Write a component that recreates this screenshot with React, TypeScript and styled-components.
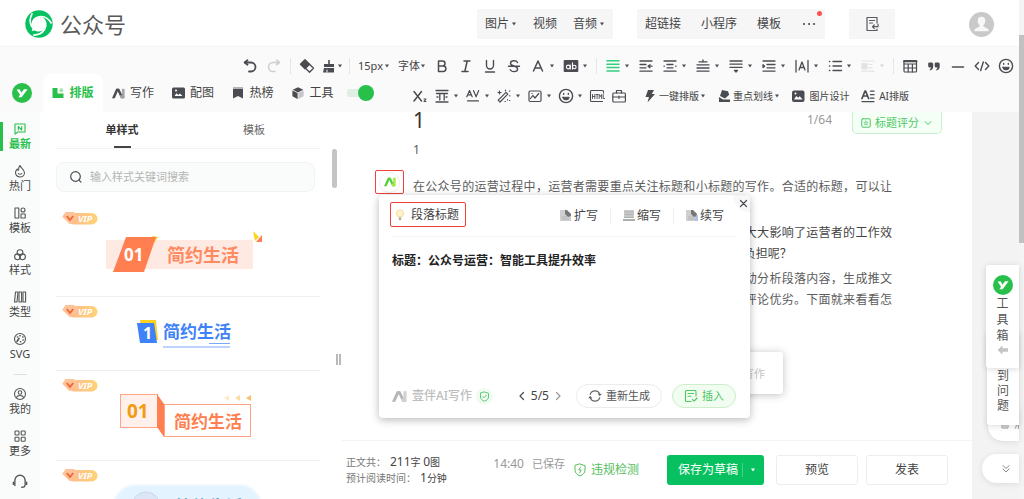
import React from 'react';
import styled, { createGlobalStyle } from 'styled-components';

const INK = '#4b4b52';
const GREEN = '#28c04b';

const Global = createGlobalStyle`
  *, *::before, *::after { box-sizing: border-box; }
  body {
    margin: 0;
    background: #fff;
    color: #5c5c5c;
    font-family: "Noto Sans", "Noto Sans CJK SC", sans-serif;
    font-size: 12px;
    line-height: 16px;
  }
  button, input, select { font: inherit; color: inherit; }
  button { padding: 0; border: 0; background: none; cursor: pointer; }
  h1, p, ul, dl, dd { margin: 0; padding: 0; }
  ul { list-style: none; }
  svg { display: block; flex: none; }
`;

/* ---------- icons ---------- */

type IconProps = { w?: number; h?: number; box?: string; color?: string; sw?: number; children: React.ReactNode };

const Icon = ({ w = 16, h = 16, box = '0 0 16 16', color = INK, sw = 1.4, children }: IconProps) => (
  <svg width={w} height={h} viewBox={box} fill="none" stroke={color} strokeWidth={sw} strokeLinecap="round" strokeLinejoin="round" aria-hidden="true">
    {children}
  </svg>
);

const Caret = ({ color = INK }: { color?: string }) => (
  <svg width="6" height="16" viewBox="0 0 6 16" aria-hidden="true">
    <path d="M1 6.5h4L3 9.5z" fill={color} />
  </svg>
);

const YLogo = ({ size = 20 }: { size?: number }) => (
  <svg width={size} height={size} viewBox="0 0 20 20" aria-hidden="true">
    <circle cx="10" cy="10" r="10" fill={GREEN} />
    <path d="M4.600 6.600h3.200l1.600 3.200 2.600-3.600h3.600l-6 8H6.400l1.600-2.400z" fill="#fff" />
  </svg>
);

const AiMark = ({ w = 14, from = INK, to = '#a5a5aa' }: { w?: number; from?: string; to?: string }) => (
  <svg width={w} height={w} viewBox="0 0 14 14" aria-hidden="true">
    <path d="M0 12 4.500 2H7.500L3 12z" fill={from} />
    <path d="M10.600 2H13.600V12H10.600z" fill={to} />
    <path d="M5 2H7.800L12.600 12H9.600z" fill={from} />
    <path d="M8.300 9.200 9.600 12h3L11 8.600z" fill={to} />
  </svg>
);

const MpLogo = () => (
  <svg width="28" height="28" viewBox="0 0 28 28" aria-hidden="true">
    <circle cx="14" cy="14" r="13.700" fill="#07c160" />
    <circle cx="14" cy="14" r="7" fill="#fff" />
    {[0, 120, 240].map(a => (
      <path key={a} d="M7.300 15.500C7 10 11 6.300 16 6.500c4.500.2 8 2.500 10.500 7" transform={`rotate(${a} 14 14)`} fill="none" stroke="#fff" strokeWidth="1.700" />
    ))}
    <path d="M8 17 6.700 21.300l4.300-1.500z" fill="#fff" />
  </svg>
);

const lines = (ys: number[], x1 = 2, x2 = 14) => ys.map(y => `M${x1} ${y}H${x2}`).join('');

const icons = {
  undo: <Icon sw={1.8}><path d="M5.500 2.200 2.600 4.500l2.900 2.200" /><path d="M3 4.500h6a4 4 0 0 1 0 9H7" /></Icon>,
  redo: <Icon sw={1.600} color="#cfcfd1"><path d="m10.500 2.200 2.900 2.300-2.900 2.200" /><path d="M13 4.500H7a4 4 0 0 0 0 9h2" /></Icon>,
  eraser: <Icon><path d="M6 1.800 1.500 6.300l4.500 4.500 4.500-4.500z" fill={INK} /><path d="m10.500 6.300 4 4-4 4-4-4" /></Icon>,
  brush: <Icon><path d="M7.200 2h1.600v4H13v3H3V6h4.200zM3 10h10v4.500H2z" fill={INK} stroke="none" /><path d="M6 12v2" stroke="#fafafa" strokeWidth="1" /></Icon>,
  bold: <Icon sw={1.500}><path d="M4.500 3h4a2.500 2.500 0 0 1 0 5h-4zM4.500 8h4.700a2.700 2.700 0 0 1 0 5.400H4.500z" /></Icon>,
  italic: <Icon sw={1.500}><path d="M6 3h6M4 13.500h6M9.200 3 6.800 13.500" /></Icon>,
  underline: <Icon sw={1.400}><path d="M4.500 2.500v5a3.500 3.500 0 0 0 7 0v-5M3.500 14h9" /></Icon>,
  strike: <Icon sw={1.400}><path d="M11.500 4.500C11 3.300 9.800 2.800 8 2.800c-2 0-3.500.8-3.500 2.500C4.500 8.500 11.600 7.500 11.600 11c0 1.700-1.600 2.600-3.600 2.600-1.900 0-3.300-.7-3.700-2M2.500 8.200h11" /></Icon>,
  color: <Icon sw={1.500}><path d="m3.500 13 4.500-10 4.500 10M5 10h6" /></Icon>,
  fill: <Icon><rect x=".7" y="2" width="14.600" height="12" rx="1" fill={INK} stroke="none" /><circle cx="5.300" cy="9" r="1.900" stroke="#fff" strokeWidth="1.100" /><path d="M7.300 7v4M9.500 4.800V11" stroke="#fff" strokeWidth="1.100" /><circle cx="11.300" cy="9" r="1.800" stroke="#fff" strokeWidth="1.100" /></Icon>,
  align: <Icon color="#2fcf7c" sw={1.500}><path d={lines([2.800, 6.200, 9.600, 13], 2, 14)} /></Icon>,
  indent: <Icon sw={1.300}><path d="M2 3h12M2 6.500h6M2 9.800h6M2 13.200h12M10 8.200h4m-2-1.500-2 1.500 2 1.500" /></Icon>,
  center: <Icon sw={1.300}><path d="M2 3h12M5 6.500h6M5 9.800h6M2 13.200h12M2 8.200h.4M13.600 8.200h.4" /></Icon>,
  before: <Icon sw={1.300}><path d="M2 6.800h12M2 10h12M2 13.200h12M4 3.800h8M8 2v2" /></Icon>,
  after: <Icon sw={1.300}><path d="M2 3h12M2 6.200h12M2 9.400h12M6.500 12.300h3L8 14z" /></Icon>,
  margin: <Icon sw={1.300}><path d="M2 3h12M6 6.500h8M6 9.800h8M2 13.200h12M2 6.800v2.800l1.600-1.400z" /></Icon>,
  spacing: <Icon sw={1.300}><path d="M2 2.500v11.500M14 2.500v11.500M5 12l3-8 3 8M6 9.500h4" /></Icon>,
  list: <Icon sw={1.400}><path d="M6 3.500h8.500M6 8h8.500M6 12.500h8.500M2.500 3.500h.3M2.500 8h.3M2.500 12.500h.3" /></Icon>,
  float: <Icon color="#e3e3e5" sw={1.200}><path d="M2 3h12M9 6.500h3M9 9.800h3M2 13.200h12" /><rect x="2" y="5.500" width="5" height="5.500" fill="#e3e3e5" /></Icon>,
  table: <Icon sw={1.200}><rect x="2" y="2.500" width="12.500" height="11.500" rx="1" /><path d="M2 6h12.500M2 10h12.500M6.200 6v8M10.400 6v8" /><path d="M2 3.200h12.500" strokeWidth="2" /></Icon>,
  quote: <Icon><path d="M3.200 4.500h2.500a1.500 1.500 0 0 1 1.500 1.500v2.500c0 2.200-1.200 3.600-3.400 4v-1.300c.8-.3 1.200-.9 1.200-1.800H3.700a1.500 1.500 0 0 1-1.500-1.500V5.500a1 1 0 0 1 1-1zM9.700 4.500h2.500A1.500 1.500 0 0 1 13.700 6v2.500c0 2.200-1.200 3.600-3.400 4v-1.300c.8-.3 1.200-.9 1.200-1.800h-1.300a1.500 1.500 0 0 1-1.500-1.500V5.500a1 1 0 0 1 1-1z" fill={INK} stroke="none" /></Icon>,
  rule: <Icon sw={1.600}><path d="M2.500 9h11" /></Icon>,
  code: <Icon sw={1.400}><path d="M4.500 4.500 1.200 8l3.300 3.500M11.500 4.500 14.800 8l-3.300 3.500M9.300 4 6.700 12.500" /></Icon>,
  smile: <Icon sw={1.400}><circle cx="8" cy="8" r="6.600" /><path d="M4.800 9.300h6.400a3.200 2.600 0 0 1-6.400 0z" fill={INK} strokeWidth="1" /><path d="M5.700 5.500v.8M10.300 5.500v.8" /></Icon>,
  sub: <Icon sw={1.500}><path d="m2 3.500 7.500 9.500M9.500 3.500 2 13" /><path d="M12 11h2l-2 2.500h2" strokeWidth="1.100" /></Icon>,
  justify: <Icon sw={1.300}><path d="M2 2.500h12M2 14h12M2.500 5.500h11M5.800 5.500V12M10.200 5.500V12M3 9h1M12 9h1" /></Icon>,
  kerning: <Icon sw={1.200}><path d="m1.800 8.800 2.700-6.300 2.700 6.300M2.800 6.800h3.400M8.500 2.500l2.600 6.300 2.600-6.300M2.500 12.800h11" /></Icon>,
  wand: <Icon sw={1.200}><path d="M2.200 12.200 10 4.400l1.800 1.800L4 14zM9.500 2.200v.6M13.500 3.200l.3-.3M13.800 7.500v.5M3.500 3v3M2 4.500h3M11.500 11.500v.4M9 13.500h.4M13.500 12.500h.2" /></Icon>,
  image: <Icon sw={1.200}><rect x="2" y="3" width="12" height="10.500" rx="1.200" /><path d="m3.500 10.500 2.300-3 2.200 2.500 3.800-4.500M5 5.500h.2" /></Icon>,
  html: <Icon sw={1.100}><path d="M14.500 5V3.500a1 1 0 0 0-1-1h-11a1 1 0 0 0-1 1v9a1 1 0 0 0 1 1h11" /><path d="M3.500 6.500v4M5.800 6.500v4M3.500 8.500h2.300M7 6.500h2.200M8.100 6.500v4M10.200 10.500v-4l1.200 2 1.200-2v4M14.200 6.500v4h1.400" strokeWidth=".9" /></Icon>,
  toolbox: <Icon sw={1.200}><rect x="1.800" y="5" width="12.600" height="9" rx="1" /><path d="M5.500 5V2.500h5V5M1.800 9h12.600M8 8v2.500" /></Icon>,
  bolt: <Icon><path d="M6 2h6L9.800 6H13L5.500 14.500 7 9H3.500z" fill={INK} stroke="none" /></Icon>,
  marker: <Icon><path d="m6 2 6 1.200 1.200 3.500L9 10.500 4 8zM3 9l4 2.500H14V14H3z" fill={INK} stroke="none" /></Icon>,
  picture: <Icon><rect x="2" y="2.500" width="12.500" height="11.500" rx="2" fill={INK} stroke="none" /><path d="M4 11.500 6.300 8l1.800 1.800 1.600-1.500 3 3.200z" fill="#fff" stroke="none" /><circle cx="5.500" cy="5.500" r="1" fill="#fff" stroke="none" /></Icon>,
  aiText: <Icon sw={1.300}><path d="m2 10.500 3-7.500h.6l3 7.500M3 8h4.500" strokeWidth="1.700" /><path d="M10.500 3.200h3.500M10.500 6.700h3.500M10.500 10.200h3.500M2 13.600h12" /></Icon>,
};

/* ---------- shell ---------- */

const Shell = styled.div`
  display: flex;
  height: 100vh;
  overflow: hidden;
`;
const Page = styled.div`
  flex: 1;
  min-width: 0;
  display: flex;
  flex-direction: column;
`;
const PageScroll = styled.div`
  width: 5px;
  padding-top: 35px;
  background: #f4f4f4;
  &::before {
    content: "";
    display: block;
    height: 208px;
    background: #c1c1c1;
  }
`;

/* ---------- header ---------- */

const Header = styled.header`
  display: flex;
  align-items: center;
  gap: 24px;
  height: 46px;
  padding: 2px 25px 0;
`;
const Brand = styled.a`
  display: flex;
  align-items: center;
  gap: 7px;
  margin-right: auto;
  color: #595959;
  font-size: 22px;
  line-height: 28px;
  text-decoration: none;
`;
const InsertGroup = styled.nav<{ $gap?: number }>`
  position: relative;
  display: flex;
  align-items: center;
  gap: ${p => p.$gap ?? 16}px;
  height: 30px;
  padding: 0 8px;
  background: #f6f6f7;
  border-radius: 2px;
`;
const InsertButton = styled.button`
  display: flex;
  align-items: center;
  gap: 2px;
  color: #444;
`;
const RedDot = styled.i`
  position: absolute;
  top: 2px;
  right: 3px;
  width: 5px;
  height: 5px;
  border-radius: 50%;
  background: #fa5151;
`;
const IconButton = styled.button`
  display: grid;
  place-items: center;
  width: 46px;
  height: 30px;
  background: #f6f6f7;
`;
const Avatar = styled.button`
  margin: 0 0 0 50px;
`;

/* ---------- toolbar ---------- */

const ToolBand = styled.div`
  background: #fafafa;
  border-top: 1px solid #f5f5f5;
`;
const ToolRow = styled.div`
  display: flex;
  align-items: center;
  gap: 8px;
  height: 27px;
  padding: 11px 0 0 242px;
`;
const LowerBand = styled.div`
  display: flex;
  height: 38px;
`;
const Tool = styled.button<{ $tight?: boolean }>`
  display: flex;
  align-items: center;
  gap: ${p => (p.$tight ? 0 : 3)}px;
  margin-right: ${p => (p.$tight ? -2 : 0)}px;
`;
const Rule = styled.i`
  width: 1px;
  height: 16px;
  background: #e6e6e6;
`;
const SelectWrap = styled.label<{ $w: number }>`
  display: flex;
  width: ${p => p.$w}px;
  select {
    flex: 1;
    min-width: 0;
    padding: 0;
    border: 0;
    background: none;
    appearance: none;
    color: #444;
    font-size: 11px;
    line-height: 16px;
  }
`;
const LogoCell = styled.a`
  display: grid;
  place-items: center;
  width: 43px;
`;
const ModeTab = styled.button<{ $on?: boolean }>`
  display: flex;
  align-items: center;
  justify-content: center;
  gap: 5px;
  width: 60px;
  border-radius: 8px 8px 0 0;
  background: ${p => (p.$on ? '#fff' : 'transparent')};
  color: ${p => (p.$on ? GREEN : '#444')};
  font-weight: ${p => (p.$on ? 700 : 400)};
`;
const Toggle = styled.label`
  display: grid;
  align-items: center;
  width: 31px;
  padding-left: 4px;
  input {
    appearance: none;
    width: 27px;
    height: 16px;
    margin: 0;
    display: flex;
    justify-content: flex-end;
    background: linear-gradient(#e0efe3, #e0efe3) center / 27px 8px no-repeat;
    border-radius: 8px;
  }
  input::before {
    content: "";
    width: 16px;
    height: 16px;
    border-radius: 50%;
    background: ${GREEN};
  }
`;
const LowerTools = styled.div`
  display: flex;
  align-items: center;
  gap: 6px;
  padding: 6px 0 0 38px;
`;
const NamedTools = styled.div`
  display: flex;
  gap: 10px;
  padding-left: 9px;
`;
const NamedTool = styled.button`
  display: flex;
  align-items: center;
  gap: 1px;
  color: #444;
  font-size: 10px;
  white-space: nowrap;
`;

/* ---------- body ---------- */

const Body = styled.div`
  flex: 1;
  min-height: 0;
  display: flex;
`;
const Rail = styled.nav`
  width: 40px;
  padding-top: 10px;
  background: #fafcfb;
`;
const RailList = styled.ul`
  display: flex;
  flex-direction: column;
  gap: 13px;
`;
const RailItem = styled.button<{ $on?: boolean }>`
  display: flex;
  flex-direction: column;
  align-items: center;
  gap: 1px;
  width: 100%;
  font-size: 11px;
  line-height: 14px;
  color: ${p => (p.$on ? GREEN : '#444')};
  font-weight: ${p => (p.$on ? 700 : 400)};
  box-shadow: ${p => (p.$on ? `inset 3px 0 ${GREEN}` : 'none')};
`;
const RailRule = styled.div`
  display: grid;
  place-items: center;
  height: 26px;
  &::before {
    content: "";
    width: 13px;
    height: 1px;
    background: #ddd;
  }
`;
const Panel = styled.section`
  display: flex;
  flex-direction: column;
  width: 292px;
  padding: 0 12px 0 16px;
  overflow: hidden;
`;
const PanelTabs = styled.div`
  display: flex;
  flex: none;
  height: 37px;
  border-bottom: 1px solid #f2f2f2;
`;
const PanelTab = styled.button<{ $on?: boolean }>`
  flex: 1;
  display: flex;
  flex-direction: column;
  align-items: center;
  justify-content: space-between;
  padding-top: 10px;
  font-size: 11px;
  color: ${p => (p.$on ? '#333' : '#666')};
  font-weight: ${p => (p.$on ? 700 : 400)};
  &::after {
    content: "";
    width: 17px;
    height: 2px;
    background: ${p => (p.$on ? '#444' : 'transparent')};
  }
`;
const Search = styled.label`
  display: flex;
  flex: none;
  align-items: center;
  gap: 7px;
  height: 30px;
  margin: 13px 5px 12px 0;
  padding-left: 12px;
  background: #fafcfb;
  border: 1px solid #f1f4f3;
  border-radius: 8px;
  input {
    flex: 1;
    min-width: 0;
    padding: 0;
    border: 0;
    outline: 0;
    background: none;
    font-size: 11px;
  }
  input::placeholder { color: #b4b4b4; }
`;
const Card = styled.li<{ $h: number }>`
  position: relative;
  height: ${p => p.$h}px;
  border-bottom: 1px solid #f0f0f0;
  svg { overflow: visible; }
  > svg:last-child { width: 100%; height: 100%; }
`;
const VipSpot = styled.span`
  position: absolute;
  top: 8px;
  left: 6px;
`;
const SplitStrip = styled.div`
  display: flex;
  flex-direction: column;
  width: 10px;
`;
const PanelThumb = styled.i`
  width: 5px;
  height: 39px;
  margin: 37px 0 166px;
  border-radius: 3px;
  background: #c4c4c6;
`;
const SplitHandle = styled.i`
  align-self: flex-end;
  width: 5px;
  height: 11px;
  margin-right: 1px;
  border: solid #b9b9bd;
  border-width: 0 2px;
`;

/* ---------- editor ---------- */

const Editor = styled.main`
  flex: 1;
  min-width: 0;
  display: flex;
  flex-direction: column;
`;
const Sheet = styled.div`
  flex: 1;
  min-height: 0;
  padding: 0 80px 0 71px;
`;
const TitleRow = styled.div`
  display: flex;
  align-items: flex-start;
  height: 27px;
  margin-right: -50px;
`;
const Title = styled.h1`
  margin-right: auto;
  color: #333;
  font-size: 21px;
  font-weight: 400;
  line-height: 16px;
`;
const Count = styled.span`
  margin-right: 20px;
  color: #999;
`;
const ScoreButton = styled.button`
  display: flex;
  align-items: center;
  gap: 4px;
  height: 22px;
  padding: 0 8px;
  border: 1px solid #c9efd0;
  border-top: 0;
  border-radius: 0 0 5px 5px;
  background: #f4fff5;
  color: #4cc764;
  font-size: 11px;
`;
const Author = styled.p`
  height: 37px;
  padding-top: 3px;
`;
const Article = styled.article`
  position: relative;
  text-align: justify;
  line-height: 21px;
  p + p { margin-top: 4px; }
`;
const Lead = styled.p`
  min-height: 42px;
  text-align-last: justify;
`;
const Strong = styled.p`
  color: #444;
`;
const Spot = styled.div`
  position: absolute;
  top: -6px;
  left: -38px;
  display: grid;
  place-items: center;
  width: 29px;
  height: 24px;
  border: 1px solid #f0413a;
  border-radius: 2px;
  button {
    display: grid;
    place-items: center;
    width: 21px;
    height: 21px;
    border: 1px solid #f0f0f0;
    border-radius: 50%;
    background: #fff;
  }
`;
const BackCard = styled.div`
  position: absolute;
  top: 176px;
  left: 200px;
  width: 170px;
  height: 42px;
  padding: 11px 18px;
  border-radius: 3px;
  background: #fff;
  box-shadow: 0 1px 8px rgba(0, 0, 0, .25);
  color: #c4c4c4;
  font-size: 11px;
  text-align: right;
`;
const Popup = styled.section`
  position: absolute;
  top: 19px;
  left: -34px;
  display: flex;
  flex-direction: column;
  width: 371px;
  height: 223px;
  padding: 0 14px 10px 13px;
  border-radius: 4px;
  background: #fff;
  box-shadow: 0 2px 9px rgba(0, 0, 0, .28);
  line-height: 16px;
`;
const PopupHead = styled.header`
  display: flex;
  align-items: center;
  height: 42px;
  border-bottom: 1px solid #f3f3f3;
`;
const MainAction = styled.button`
  display: flex;
  align-items: center;
  gap: 5px;
  height: 25px;
  margin: 0 auto 2px -2px;
  padding: 0 6px 0 3px;
  border: 1px solid #f0413a;
  border-radius: 2px;
  color: #444;
`;
const SideAction = styled.button`
  display: flex;
  align-items: center;
  gap: 2px;
  padding: 0 12px;
  color: #444;
  & + & { border-left: 1px solid #f0f0f0; }
`;
const Close = styled.button`
  position: absolute;
  top: 0;
  right: 0;
  display: grid;
  place-items: center;
  width: 17px;
  height: 17px;
  padding-left: 4px;
  border-radius: 0 4px 0 17px;
  background: #f7f7f7;
`;
const Result = styled.p`
  flex: 1;
  padding-top: 16px;
  color: #222;
  font-weight: 700;
`;
const PopupFoot = styled.footer`
  display: flex;
  align-items: center;
  gap: 4px;
`;
const AiName = styled.span`
  display: flex;
  align-items: center;
  gap: 5px;
  color: #bdbdbd;
  font-weight: 500;
`;
const Shield = styled.span`
  display: grid;
  place-items: center;
  width: 17px;
  height: 17px;
  border-radius: 50%;
  background: #f0fbf2;
`;
const Pager = styled.div`
  display: flex;
  align-items: center;
  gap: 4px;
  margin: 0 9px 0 auto;
  color: #444;
`;
const Pill = styled.button<{ $green?: boolean }>`
  display: flex;
  align-items: center;
  gap: 4px;
  height: 24px;
  margin-left: ${p => (p.$green ? 6 : 0)}px;
  padding: 0 11px;
  border: 1px solid ${p => (p.$green ? '#cdeecb' : '#ececec')};
  border-radius: 12px;
  background: ${p => (p.$green ? '#f1fdf0' : '#fff')};
  color: ${p => (p.$green ? '#4cc764' : '#555')};
  font-size: 11px;
`;

/* ---------- bottom bar ---------- */

const BottomBar = styled.footer`
  display: flex;
  align-items: center;
  height: 59px;
  padding: 0 24px 0 4px;
  border-top: 1px solid #f3f3f3;
  background: #fff;
  white-space: nowrap;
`;
const Stats = styled.dl`
  margin-right: auto;
  font-size: 10px;
  div { display: flex; gap: 4px; align-items: baseline; }
  dt { color: #777; }
  dd { color: #444; }
  b { font-size: 12px; font-weight: 400; line-height: 15px; }
`;
const Saved = styled.p`
  display: flex;
  gap: 8px;
  margin: 0 9px 12px 0;
  color: #999;
  small { font-size: 11px; }
`;
const CheckLink = styled.a`
  display: flex;
  align-items: center;
  gap: 5px;
  margin-right: 28px;
  color: #55c05c;
  text-decoration: none;
`;
const SaveSplit = styled.div`
  display: flex;
  align-items: center;
  height: 30px;
  border-radius: 3px;
  background: #07c160;
  color: #fff;
  button { height: 14px; line-height: 14px; }
  button:first-child { padding: 0 4px 0 11px; }
  button:last-child { padding: 0 8px 0 7px; border-left: 1px solid #4dd28d; display: flex; align-items: center; }
`;
const PlainButton = styled.button`
  width: 82px;
  height: 30px;
  margin-left: 8px;
  border: 1px solid #ededed;
  border-radius: 3px;
  color: #444;
  &:first-of-type { margin-left: 12px; }
`;

/* ---------- right side ---------- */

const Side = styled.aside`
  position: relative;
  width: 47px;
  background: #f3f3f3;
`;
const SideCard = styled.button<{ $top: number; $h: number; $x: number; $end?: boolean }>`
  position: absolute;
  top: ${p => p.$top}px;
  left: ${p => p.$x}px;
  right: 0;
  display: flex;
  flex-direction: column;
  align-items: center;
  justify-content: ${p => (p.$end ? 'flex-end' : 'flex-start')};
  gap: ${p => (p.$end ? 0 : 1)}px;
  height: ${p => p.$h}px;
  padding: 10px 0 12px;
  border-radius: 3px 0 0 3px;
  background: #fff;
  box-shadow: 0 1px 6px rgba(0, 0, 0, .15);
  color: #555;
  line-height: 15px;
`;
const SidePill = styled.button<{ $top: number; $x: number; $h: number }>`
  position: absolute;
  top: ${p => p.$top}px;
  left: ${p => p.$x}px;
  right: 0;
  display: flex;
  align-items: center;
  justify-content: flex-end;
  gap: 4px;
  height: ${p => p.$h}px;
  padding-right: 7px;
  overflow: hidden;
  border-radius: 15px 0 0 15px;
  background: #fff;
  box-shadow: 0 1px 6px rgba(0, 0, 0, .1);
  color: #888;
  font-size: 11px;
`;
const Cut = styled.span`
  width: 5px;
  margin-right: -7px;
  overflow: hidden;
`;

/* ---------- style cards ---------- */

const Vip = () => (
  <svg width="36" height="13" viewBox="0 0 36 13" role="img" aria-label="VIP">
    <defs>
      <linearGradient id="vip"><stop offset="0" stopColor="#ffb98f" /><stop offset="1" stopColor="#ffd377" /></linearGradient>
    </defs>
    <rect x="6" y="1" width="29.500" height="11.500" rx="5.700" fill="url(#vip)" />
    <path d="M3.500 0h8.500l3.500 4.500L8 12.500.2 4.800z" fill="#ffc39a" />
    <path d="m4.800 4 3.200 4 3.200-4" fill="none" stroke="#f0683a" strokeWidth="1.900" />
    <text x="16" y="10" fontSize="9" fontWeight="700" fontStyle="italic" fill="#fff">VIP</text>
  </svg>
);

const sample = '简约生活';

const ArtRibbon = () => (
  <svg aria-hidden="true">
    <rect x="50" y="36" width="147" height="29" fill="#ffe9e3" />
    <path d="m96 32 6 1-4 6zM56 68l5-4 4 4z" fill="#ffd21e" />
    <path d="M70 33h30L88 68H57z" fill="#ff7f50" />
    <text x="68" y="57" fontSize="17" fontWeight="700" fill="#fff">01</text>
    <text x="111" y="58" fontSize="18" fontWeight="700" fill="#ff8a5f">{sample}</text>
    <path d="m197 27 6 6-4 4z" fill="#ffd21e" />
    <path d="m206 31-6 7h6z" fill="#ff7f50" />
  </svg>
);
const ArtBlue = () => (
  <svg aria-hidden="true">
    <path d="M84 23h16l2 20H86z" fill="#ffd21e" />
    <path d="M81 26h17l3 20H84z" fill="#3f82f7" />
    <text x="87" y="42" fontSize="16" fontWeight="700" fill="#fff">1</text>
    <text x="107" y="41" fontSize="17" fontWeight="700" fill="#3f82f7">{sample}</text>
    <path d="M153 46.500h21" stroke="#7ba9f9" />
    <path d="M107 50h67" stroke="#bcd4fd" strokeWidth="2" />
  </svg>
);
const ArtFold = () => (
  <svg aria-hidden="true">
    <rect x="64.500" y="23.500" width="37" height="33" fill="#fff0ec" stroke="#ffa586" />
    <rect x="108.500" y="33.500" width="86" height="32" fill="#fff" stroke="#ffa586" />
    <path d="m101 23 7 10v33l-7-10z" fill="#ff7f50" />
    <text x="71" y="47" fontSize="19" fontWeight="700" fill="#f39c12">01</text>
    <text x="118" y="57" fontSize="17" fontWeight="700" fill="#ff7f50">{sample}</text>
    <path d="m168 27 5-3v6z" fill="#fdebc8" />
    <path d="m179 27 5-3v6z" fill="#fbdca0" />
    <path d="m190 27 5-3v6z" fill="#f8c06a" />
  </svg>
);
const ArtPill = () => (
  <svg aria-hidden="true">
    <rect x="58" y="24" width="147" height="42" rx="21" fill="#e3f3ff" stroke="#f1f9ff" strokeWidth="2" />
    <circle cx="90" cy="45" r="14" fill="#dde6f6" stroke="#cbd6ee" />
    <text x="119" y="52" fontSize="17" fontWeight="700" fill="#5f9fc0">{sample}</text>
  </svg>
);

/* ---------- data ---------- */

const ri = (children: React.ReactNode, color = '#555') => <Icon w={14} h={14} box="0 0 14 14" sw={1.100} color={color}>{children}</Icon>;

const railTop = [
  { name: '最新', on: true, icon: ri(<><path d="M2 2h10v8H5l-3 2z" /><path d="M5.300 8V4.500L8.700 8V4.500" /></>, GREEN) },
  { name: '热门', icon: ri(<><path d="M7 1.500c.5 2 4.500 4 4.500 7.200a4.500 4.300 0 0 1-9 0c0-1.700 1-3 1.800-3.700.3.800.7 1.200 1.200 1.300C5.500 4.500 6 2.500 7 1.500z" /><path d="M5.300 9.500c.8 1 2.600 1 3.400 0" /></>) },
  { name: '模板', icon: ri(<><rect x="2" y="2" width="3.800" height="10" /><circle cx="10" cy="4" r="2" /><rect x="8" y="8" width="4.200" height="4" /></>) },
  { name: '样式', icon: ri(<><circle cx="7" cy="4.600" r="2.900" /><circle cx="4.500" cy="8.800" r="2.900" /><circle cx="9.500" cy="8.800" r="2.900" /></>) },
  { name: '类型', icon: ri(<><path d="M2.500 2h2.500L4 12H1.500z" /><rect x="6" y="2" width="2.600" height="10" /><rect x="10" y="2" width="2.600" height="10" /></>) },
  { name: 'SVG', icon: ri(<><circle cx="7" cy="7" r="5.500" /><path d="M6 6.500 4 9.500M4.500 5h.3M7 3.700h.3M9.700 5h.3M10 8h.2M7.500 9.800h.2" strokeWidth="1.600" /></>) },
];
const railBottom = [
  { name: '我的', icon: ri(<><circle cx="7" cy="7" r="5.500" /><circle cx="7" cy="5.500" r="1.800" /><path d="M3.600 10.500c.6-2.600 6.200-2.600 6.800 0" /></>) },
  { name: '更多', icon: ri(<><rect x="2" y="2" width="4" height="4" rx=".8" /><rect x="8.200" y="2" width="4" height="4" rx=".8" /><rect x="2" y="8.200" width="4" height="4" rx=".8" /><rect x="8.200" y="8.200" width="4" height="4" rx=".8" /></>) },
];

const modes = [
  { name: '排版', on: true, icon: <Icon w={12} h={12} box="0 0 12 12"><path d="M.5 1h5v5.500h6V11H.5z" fill={GREEN} stroke="none" /><circle cx="9.300" cy="3.200" r="2" fill="#a5e3b1" stroke="none" /></Icon> },
  { name: '写作', icon: <AiMark w={13} /> },
  { name: '配图', icon: <Icon w={13} h={12} box="0 0 13 12"><rect y=".5" width="13" height="11" rx="1.500" fill={INK} stroke="none" /><path d="m2.500 9 2-2.800L6.300 8l1.500-1.500L10.500 9z" fill="#fff" stroke="none" /><circle cx="4" cy="3.500" r="1" fill="#fff" stroke="none" /></Icon> },
  { name: '热榜', icon: <Icon w={12} h={12} box="0 0 12 12"><path d="M1 0h10v2H1z" fill="#b5b5b9" stroke="none" /><path d="M1 2h10v9.500L6 9l-5 2.500z" fill={INK} stroke="none" /></Icon> },
  { name: '工具', icon: <Icon w={12} h={12} box="0 0 12 12"><path d="m6 .2 5.300 2.600L6 5.500.7 2.800z" fill={INK} stroke="none" /><path d="M.4 3.600 5.600 6v6L.4 9.300z" fill={INK} stroke="none" /><path d="M11.600 3.600 6.400 6v6l5.200-2.700z" fill="#c6c6ca" stroke="none" /></Icon> },
];

type ToolDef = [name: string, icon: React.ReactNode, menu?: boolean];
const textTools: ToolDef[] = [
  ['加粗', icons.bold], ['斜体', icons.italic], ['下划线', icons.underline], ['删除线', icons.strike],
  ['文字颜色', icons.color, true], ['背景色', icons.fill, true],
];
const paraTools: ToolDef[] = [
  ['对齐', icons.align, true], ['首行缩进', icons.indent], ['居中', icons.center, true], ['段前距', icons.before, true],
  ['段后距', icons.after, true], ['两端缩进', icons.margin, true], ['字间距', icons.spacing, true], ['列表', icons.list, true],
];
const blockTools: ToolDef[] = [
  ['表格', icons.table], ['引用', icons.quote], ['分隔线', icons.rule], ['代码', icons.code], ['表情', icons.smile],
];
const lowerTools: ToolDef[] = [
  ['下标', icons.sub], ['行间距', icons.justify, true], ['字符间距', icons.kerning, true], ['魔棒', icons.wand, true],
  ['图片', icons.image, true], ['表情', icons.smile, true], ['HTML', icons.html], ['工具箱', icons.toolbox],
];

const Tools = ({ items }: { items: ToolDef[] }) => (
  <>
    {items.map(([name, icon, menu]) => (
      <Tool key={name} type="button" aria-label={name} aria-haspopup={menu}>
        {icon}
        {menu && <Caret />}
      </Tool>
    ))}
  </>
);

const DocIcon = ({ kind }: { kind: number }) => (
  <svg width="12" height="13" viewBox="0 0 12 13" aria-hidden="true">
    {kind === 1 ? (
      <>
        <path d="M1 1h10v7H1z" fill="#c9c9c9" />
        <path d="M0 10h12v2H0zM1 8h10v1H1z" fill="#adadad" />
        <path d="M2 3h8M2 5.500h8" stroke="#b5b5b5" />
      </>
    ) : (
      <>
        <path d="M0 1h6l5 4v7H0z" fill="#cfcfcf" />
        <path d="M5 1h2l4 4v2L8 8 5 5z" fill="#77777a" />
        {kind === 2 && <path d="M10 6h2v6H9z" fill="#a9c6e6" />}
        <path d="M2 8h5M2 10h7" stroke="#b5b5b5" />
      </>
    )}
  </svg>
);

export default function App() {
  return (
    <Shell>
      <Global />
      <Page>
        <Header>
          <Brand href="#"><MpLogo />公众号</Brand>
          <InsertGroup>
            <InsertButton type="button" aria-haspopup>图片<Caret /></InsertButton>
            <InsertButton type="button">视频</InsertButton>
            <InsertButton type="button" aria-haspopup>音频<Caret /></InsertButton>
          </InsertGroup>
          <InsertGroup $gap={20}>
            <InsertButton type="button">超链接</InsertButton>
            <InsertButton type="button">小程序</InsertButton>
            <InsertButton type="button">模板</InsertButton>
            <InsertButton type="button" aria-label="更多">
              <Icon><path d="M3 8h.1M8 8h.1M13 8h.1" strokeWidth="2" /></Icon>
            </InsertButton>
            <RedDot />
          </InsertGroup>
          <IconButton type="button" aria-label="导入文档">
            <Icon sw={1.200} color="#5a5a5e"><path d="M13 7V1.500H3v13h10v-1.500M5.500 4.500h5M5.500 7h3M14 8v2.700H8.500m1.800-1.900-1.800 1.900 1.800 1.900" /></Icon>
          </IconButton>
          <Avatar type="button" aria-label="账号">
            <svg width="25" height="25" viewBox="0 0 25 25" aria-hidden="true">
              <circle cx="12.500" cy="12.500" r="12.500" fill="#c9c9c9" />
              <path d="M12.500 4.800c2.300 0 3.800 1.600 3.800 4 0 2-.9 3.600-1.900 4.400v1.300l4.300 2.200c.7.400.9.900.9 2.500H5.400c0-1.600.2-2.100.9-2.500l4.300-2.200v-1.300c-1-.8-1.900-2.400-1.900-4.400 0-2.400 1.500-4 3.800-4z" fill="#f7f7f7" />
            </svg>
          </Avatar>
        </Header>

        <ToolBand>
          <ToolRow>
            <Tool type="button" aria-label="撤销">{icons.undo}</Tool>
            <Tool type="button" aria-label="重做">{icons.redo}</Tool>
            <Rule />
            <Tool type="button" aria-label="清除格式" $tight>{icons.eraser}</Tool>
            <Tool type="button" aria-label="格式刷" aria-haspopup $tight>{icons.brush}<Caret /></Tool>
            <Rule />
            <SelectWrap $w={32}>
              <select aria-label="字号" defaultValue="15px"><option>15px</option></select>
              <Caret />
            </SelectWrap>
            <SelectWrap $w={28}>
              <select aria-label="字体" defaultValue="字体"><option>字体</option></select>
              <Caret />
            </SelectWrap>
            <Tools items={textTools} />
            <Rule />
            <Tools items={paraTools} />
            <Tool type="button" aria-label="浮动" disabled>{icons.float}<Caret color="#d5d5d7" /></Tool>
            <Rule />
            <Tools items={blockTools} />
          </ToolRow>
          <LowerBand>
            <LogoCell href="#" aria-label="壹伴"><YLogo /></LogoCell>
            {modes.map(m => (
              <ModeTab key={m.name} type="button" $on={m.on}>{m.icon}{m.name}</ModeTab>
            ))}
            <Toggle><input type="checkbox" role="switch" aria-label="启用插件" defaultChecked /></Toggle>
            <LowerTools>
              <Tools items={lowerTools} />
              <NamedTools>
                <NamedTool type="button" aria-haspopup>{icons.bolt}一键排版<Caret /></NamedTool>
                <NamedTool type="button" aria-haspopup>{icons.marker}重点划线<Caret /></NamedTool>
                <NamedTool type="button">{icons.picture}&nbsp;图片设计</NamedTool>
                <NamedTool type="button">{icons.aiText}&nbsp;AI排版</NamedTool>
              </NamedTools>
            </LowerTools>
          </LowerBand>
        </ToolBand>

        <Body>
          <Rail>
            <RailList>
              {railTop.map(r => (
                <li key={r.name}><RailItem type="button" $on={r.on}>{r.icon}{r.name}</RailItem></li>
              ))}
            </RailList>
            <RailRule />
            <RailList>
              {railBottom.map(r => (
                <li key={r.name}><RailItem type="button">{r.icon}{r.name}</RailItem></li>
              ))}
              <li>
                <RailItem type="button" aria-label="客服">
                  <Icon w={16} h={20} box="0 0 14 16" sw={1.200} color="#555"><path d="M2.500 9V7.500a4.500 4.500 0 0 1 9 0V9M2.500 8v4M11.500 8v3c0 1.500-1 2.500-3 2.500" /><path d="M1.200 9v2M12.800 9v2" /></Icon>
                </RailItem>
              </li>
            </RailList>
          </Rail>

          <Panel>
            <PanelTabs>
              <PanelTab type="button" $on>单样式</PanelTab>
              <PanelTab type="button">模板</PanelTab>
            </PanelTabs>
            <Search>
              <Icon w={14} h={14} box="0 0 14 14" sw={1.200}><circle cx="6.500" cy="6.500" r="4.800" /><path d="m10 10.200 2 2" /></Icon>
              <input type="search" aria-label="搜索样式" placeholder="输入样式关键词搜索" />
            </Search>
            <ul>
              <Card $h={93}><VipSpot><Vip /></VipSpot><ArtRibbon /></Card>
              <Card $h={74}><VipSpot><Vip /></VipSpot><ArtBlue /></Card>
              <Card $h={90}><VipSpot><Vip /></VipSpot><ArtFold /></Card>
              <Card $h={90}><VipSpot><Vip /></VipSpot><ArtPill /></Card>
            </ul>
          </Panel>
          <SplitStrip><PanelThumb /><SplitHandle /></SplitStrip>

          <Editor>
            <Sheet>
              <TitleRow>
                <Title>1</Title>
                <Count>1/64</Count>
                <ScoreButton type="button">
                  <Icon w={10} h={10} box="0 0 10 10" sw={1} color="#4cc764"><rect x=".8" y=".8" width="8.400" height="8.400" rx="1" /><path d="m5 3 .6 1.300 1.400.2-1 1 .2 1.400L5 6.200l-1.200.7.200-1.400-1-1 1.400-.2z" strokeWidth=".7" /></Icon>
                  标题评分
                  <Icon w={10} h={10} box="0 0 10 10" sw={1} color="#4cc764"><path d="m2 3.500 3 3 3-3" /></Icon>
                </ScoreButton>
              </TitleRow>
              <Author>1</Author>
              <Article>
                <Lead>在公众号的运营过程中，运营者需要重点关注标题和小标题的写作。合适的标题，可以让</Lead>
                <Strong>然而很多时候标题需要反复推敲才能够最终定稿，耗时费力，大大影响了运营者的工作效率。那么有没有一款工具可以帮助我们在3步之内减轻写作上的负担呢？</Strong>
                <p>使用壹伴的智能写作功能就可以轻松地搞定标题，它还能够自动分析段落内容，生成推文标题，还会根据关键词和阅读数据给每一个标题打出分数并且评论优劣。下面就来看看怎么使用吧。</p>
                <Spot><button type="button" aria-label="AI写作"><AiMark w={12} from="#4fcf3a" to="#a9e84a" /></button></Spot>
                <BackCard>AI写作</BackCard>
                <Popup>
                  <PopupHead>
                    <MainAction type="button">
                      <Icon w={12} h={14} box="0 0 12 14"><circle cx="6" cy="5.500" r="3.600" fill="#fff3d0" stroke="#f8dc98" strokeWidth="1" /><path d="M4.800 9.200h2.400v3H4.800z" fill="#b9b2a2" stroke="none" /></Icon>
                      段落标题
                    </MainAction>
                    <SideAction type="button"><DocIcon kind={0} />扩写</SideAction>
                    <SideAction type="button"><DocIcon kind={1} />缩写</SideAction>
                    <SideAction type="button"><DocIcon kind={2} />续写</SideAction>
                    <Close type="button" aria-label="关闭"><Icon w={9} h={9} box="0 0 9 9" sw={1.200}><path d="m1.500 1.500 6 6M7.500 1.500l-6 6" /></Icon></Close>
                  </PopupHead>
                  <Result>标题：公众号运营：智能工具提升效率</Result>
                  <PopupFoot>
                    <AiName><AiMark w={15} from="#b5b5b5" to="#d2d2d2" />壹伴AI写作</AiName>
                    <Shield><Icon w={11} h={11} box="0 0 11 11" sw={1} color="#5cc878"><path d="M5.500 1 9.500 2.300V6c0 2-1.700 3.300-4 4.200C3.200 9.300 1.500 8 1.500 6V2.300zM3.800 5.500 5 6.800l2.300-2.500" /></Icon></Shield>
                    <Pager>
                      <button type="button" aria-label="上一条"><Icon w={10} h={10} box="0 0 10 10" sw={1.200}><path d="M6.500 1.500 3 5l3.500 3.500" /></Icon></button>
                      5/5
                      <button type="button" aria-label="下一条"><Icon w={10} h={10} box="0 0 10 10" sw={1.200} color="#999"><path d="M3.500 1.500 7 5 3.500 8.500" /></Icon></button>
                    </Pager>
                    <Pill type="button">
                      <Icon w={14} h={14} box="0 0 14 14" sw={1.100} color="#666"><path d="M2.200 5.500a5 5 0 0 1 9.600 0M11.800 8.500a5 5 0 0 1-9.600 0M13 5l-1.200 1.500L10.500 5M1 9l1.200-1.500L3.500 9" /></Icon>
                      重新生成
                    </Pill>
                    <Pill type="button" $green>
                      <Icon w={14} h={14} box="0 0 14 14" sw={1.100} color="#4cc764"><path d="M12 7V2.500a1 1 0 0 0-1-1H2.500a1 1 0 0 0-1 1v9a1 1 0 0 0 1 1H7M4 4.500h5.500M4 7.200h3M8.500 10.500l1.600 1.700 3-3.200" /></Icon>
                      插入
                    </Pill>
                  </PopupFoot>
                </Popup>
              </Article>
            </Sheet>
            <BottomBar>
              <Stats>
                <div><dt>正文共：</dt><dd><b>211</b>字 <b>0</b>图</dd></div>
                <div><dt>预计阅读时间：</dt><dd><b>1</b>分钟</dd></div>
              </Stats>
              <Saved>14:40 <small>已保存</small></Saved>
              <CheckLink href="#">
                <Icon w={12} h={14} box="0 0 12 14" sw={1} color="#55c05c"><path d="M6 1 11 2.700V7c0 2.800-2 4.800-5 6-3-1.200-5-3.200-5-6V2.700zM6.600 4 4.800 7h2.400L5.600 9.800" /></Icon>
                违规检测
              </CheckLink>
              <SaveSplit>
                <button type="button">保存为草稿</button>
                <button type="button" aria-label="更多保存选项"><Caret color="#fff" /></button>
              </SaveSplit>
              <PlainButton type="button">预览</PlainButton>
              <PlainButton type="button">发表</PlainButton>
            </BottomBar>
          </Editor>

          <Side>
            <SidePill type="button" $top={295} $x={16} $h={34}>
              <Icon w={10} h={10} box="0 0 10 10" sw={1} color="#999"><path d="M1 2.500h8M2 2.500v6.500h6V2.500M4 4.500v3M6 4.500v3M3.500 1h3" /></Icon>
              <Cut>清</Cut>
            </SidePill>
            <SideCard type="button" $top={220} $x={15} $h={93} $end>
              <span>到</span><span>问</span><span>题</span>
            </SideCard>
            <SideCard type="button" $top={153} $x={14} $h={103}>
              <YLogo />
              <span>工</span><span>具</span><span>箱</span>
              <Icon w={12} h={12} box="0 0 12 12"><path d="M5.500 1.500v2.700H11v3.600H5.500v2.700L.5 6z" fill="#c4c4c4" stroke="none" /></Icon>
            </SideCard>
            <SidePill type="button" $top={342} $x={10} $h={29} aria-label="收起">
              <Icon w={12} h={12} box="0 0 12 12" sw={1} color="#888"><path d="m3 2.500 3 3 3-3M3 6l3 3 3-3" /></Icon>
            </SidePill>
          </Side>
        </Body>
      </Page>
      <PageScroll />
    </Shell>
  );
}
